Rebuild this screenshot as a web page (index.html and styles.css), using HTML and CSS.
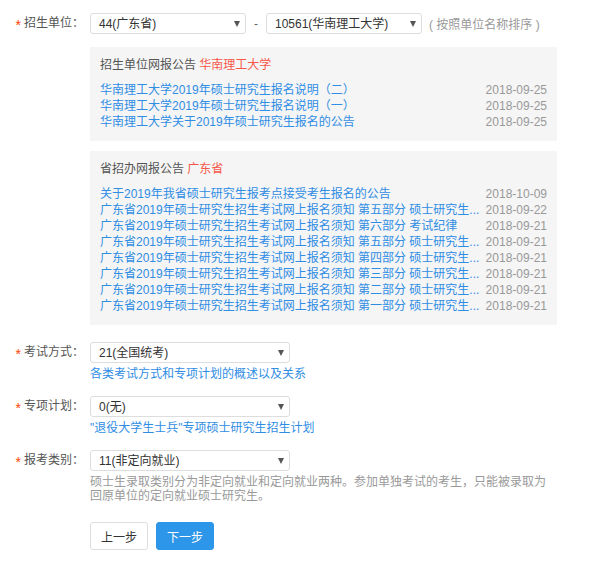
FILE: index.html
```html
<!DOCTYPE html>
<html lang="zh-CN">
  <head>
    <meta charset="UTF-8" />
    <meta name="viewport" content="width=device-width, initial-scale=1.0" />
    <title>报名信息</title>
    <link rel="stylesheet" href="styles.css">
  </head>
  <body>
    <form class="form">
      <div class="form-row first">
        <label class="form-label"><i class="req">*</i>招生单位：</label>
        <div class="form-field">
          <div class="field-line">
            <span class="select-wrap short">
              <select><option>44(广东省)</option></select>
            </span>
            <span class="dash">-</span>
            <span class="select-wrap short">
              <select><option>10561(华南理工大学)</option></select>
            </span>
            <span class="hint">( 按照单位名称排序 )</span>
          </div>

          <div class="notice">
            <div class="notice-title">招生单位网报公告 <span class="red">华南理工大学</span></div>
            <ul class="notice-list">
              <li><a href="#">华南理工大学2019年硕士研究生报名说明（二）</a><span class="date">2018-09-25</span></li>
              <li><a href="#">华南理工大学2019年硕士研究生报名说明（一）</a><span class="date">2018-09-25</span></li>
              <li><a href="#">华南理工大学关于2019年硕士研究生报名的公告</a><span class="date">2018-09-25</span></li>
            </ul>
          </div>

          <div class="notice">
            <div class="notice-title">省招办网报公告 <span class="red">广东省</span></div>
            <ul class="notice-list">
              <li><a href="#">关于2019年我省硕士研究生报考点接受考生报名的公告</a><span class="date">2018-10-09</span></li>
              <li><a href="#">广东省2019年硕士研究生招生考试网上报名须知 第五部分 硕士研究生...</a><span class="date">2018-09-22</span></li>
              <li><a href="#">广东省2019年硕士研究生招生考试网上报名须知 第六部分 考试纪律</a><span class="date">2018-09-21</span></li>
              <li><a href="#">广东省2019年硕士研究生招生考试网上报名须知 第五部分 硕士研究生...</a><span class="date">2018-09-21</span></li>
              <li><a href="#">广东省2019年硕士研究生招生考试网上报名须知 第四部分 硕士研究生...</a><span class="date">2018-09-21</span></li>
              <li><a href="#">广东省2019年硕士研究生招生考试网上报名须知 第三部分 硕士研究生...</a><span class="date">2018-09-21</span></li>
              <li><a href="#">广东省2019年硕士研究生招生考试网上报名须知 第二部分 硕士研究生...</a><span class="date">2018-09-21</span></li>
              <li><a href="#">广东省2019年硕士研究生招生考试网上报名须知 第一部分 硕士研究生...</a><span class="date">2018-09-21</span></li>
            </ul>
          </div>
        </div>
      </div>

      <div class="form-row row-exam">
        <label class="form-label"><i class="req">*</i>考试方式：</label>
        <div class="form-field">
          <span class="select-wrap">
            <select><option>21(全国统考)</option></select>
          </span>
          <a class="help help-link" href="#">各类考试方式和专项计划的概述以及关系</a>
        </div>
      </div>

      <div class="form-row">
        <label class="form-label"><i class="req">*</i>专项计划：</label>
        <div class="form-field">
          <span class="select-wrap">
            <select><option>0(无)</option></select>
          </span>
          <a class="help help-link" href="#">"退役大学生士兵"专项硕士研究生招生计划</a>
        </div>
      </div>

      <div class="form-row">
        <label class="form-label"><i class="req">*</i>报考类别：</label>
        <div class="form-field">
          <span class="select-wrap">
            <select><option>11(非定向就业)</option></select>
          </span>
          <p class="help">硕士生录取类别分为非定向就业和定向就业两种。参加单独考试的考生，只能被录取为回原单位的定向就业硕士研究生。</p>
        </div>
      </div>

      <div class="actions">
        <button type="button" class="btn">上一步</button>
        <button type="button" class="btn btn-primary">下一步</button>
      </div>
    </form>
  </body>
</html>
```

FILE: styles.css
```css
* {
  box-sizing: border-box;
}

body {
  margin: 0;
  padding-top: 13px;
  font-family: "Liberation Sans", "Noto Sans CJK SC", sans-serif;
  font-size: 12px;
  color: #333;
  background: #fff;
}

.form {
  width: 557px;
}

.form-row {
  display: flex;
  align-items: flex-start;
}

.row-exam {
  margin-top: 17px;
}

.form-row + .form-row:not(.row-exam) {
  margin-top: 15px;
}

.form-label {
  width: 90px;
  padding-right: 6px;
  text-align: right;
  line-height: 21px;
  color: #555;
  white-space: nowrap;
}

.req {
  font-style: normal;
  color: #f40;
  font-size: 14px;
  margin-right: 3px;
  vertical-align: -3px;
}

.form-field {
  flex: 1;
  min-width: 0;
}

.field-line {
  display: flex;
  align-items: center;
}

.select-wrap {
  position: relative;
  display: inline-block;
  width: 200px;
  height: 21px;
  vertical-align: top;
}

.select-wrap.short {
  width: 156px;
}

.select-wrap::after {
  content: "";
  position: absolute;
  right: 6px;
  top: 8px;
  border-left: 3.5px solid transparent;
  border-right: 3.5px solid transparent;
  border-top: 6px solid #555;
  pointer-events: none;
}

.select-wrap select {
  -webkit-appearance: none;
  appearance: none;
  width: 100%;
  height: 21px;
  padding: 0 16px 0 8px;
  border: 1px solid #ddd;
  border-radius: 3px;
  background: #fff;
  font-family: inherit;
  font-size: 12px;
  color: #333;
  outline: none;
}

.dash {
  width: 20px;
  text-align: center;
  color: #666;
}

.hint {
  margin-left: 7px;
  color: #999;
}

.notice {
  margin-top: 13px;
  padding: 10px 10px 11px;
  background: #f5f5f5;
}

.notice + .notice {
  margin-top: 10px;
}

.notice-title {
  line-height: 16px;
  margin-bottom: 9px;
  color: #555;
}

.red {
  color: #f5574a;
}

.notice-list {
  list-style: none;
  margin: 0;
  padding: 0;
}

.notice-list li {
  display: flex;
  line-height: 16px;
}

.notice-list a {
  flex: 1;
  min-width: 0;
  color: #2f8de4;
  text-decoration: none;
  white-space: nowrap;
  overflow: hidden;
}

.date {
  width: 64px;
  text-align: right;
  color: #999;
}

.help {
  display: block;
  margin: 4px 0 0;
  line-height: 14px;
  color: #999;
}

.help-link {
  color: #2f8de4;
  text-decoration: none;
}

.actions {
  margin: 19px 0 0 90px;
  display: flex;
  gap: 8px;
}

.btn {
  height: 28px;
  padding: 0 10px;
  border: 1px solid #ddd;
  border-radius: 3px;
  background: #fff;
  font-family: inherit;
  font-size: 12px;
  color: #333;
  cursor: pointer;
}

.btn-primary {
  border-color: #2d96e8;
  background: #2d96e8;
  color: #fff;
}
```
